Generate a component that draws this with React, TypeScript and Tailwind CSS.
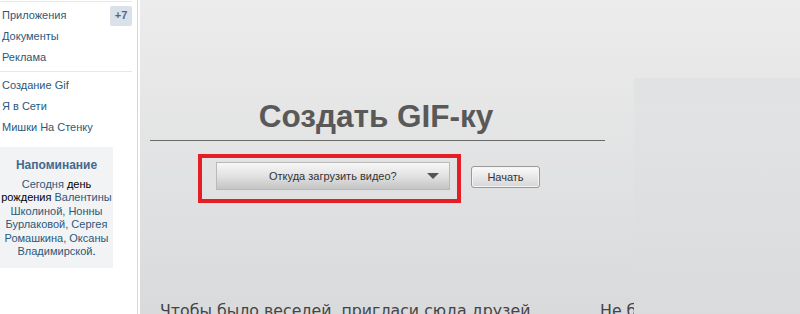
const MENU_TOP = ["Приложения", "Документы", "Реклама"]
const MENU_APPS = ["Создание Gif", "Я в Сети", "Мишки На Стенку"]

function Sidebar() {
  return (
    <aside className="w-[137px] shrink-0 bg-white text-[11px] text-[#2b587a] [font-family:'Liberation_Sans',Arial,sans-serif]">
      <div className="mt-[1px] h-px w-[132px] bg-[#e7e8ec]" />
      <ul className="mt-[3px]">
        {MENU_TOP.map((item, i) => (
          <li key={item} className="flex h-[21px] items-center justify-between pl-[2px] pr-[5px]">
            <span>{item}</span>
            {i === 0 && (
              <span className="flex h-[20px] w-[22px] items-center justify-center rounded-[2px] bg-[#dae1e8] font-bold text-[#55677d]">
                +7
              </span>
            )}
          </li>
        ))}
      </ul>
      <div className="mt-[3px] h-px w-[132px] bg-[#e7e8ec]" />
      <ul className="mt-[3px]">
        {MENU_APPS.map((item) => (
          <li key={item} className="flex h-[21px] items-center pl-[2px]">
            {item}
          </li>
        ))}
      </ul>
      <div className="mt-[9px] w-[113px] bg-[#f2f3f5] pt-[9px] pb-[10px] text-center">
        <div className="text-[12px] font-bold text-[#45688e]">Напоминание</div>
        <p className="mt-[4px] leading-[13.4px] whitespace-nowrap text-[#2b587a]">
          Сегодня <span className="text-black">день</span>
          <br />
          <span className="text-black">рождения</span> Валентины
          <br />
          Школиной, Нонны
          <br />
          Бурлаковой, Сергея
          <br />
          Ромашкина, Оксаны
          <br />
          Владимирской<span className="text-black">.</span>
        </p>
      </div>
    </aside>
  )
}

function SourceSelect() {
  return (
    <div className="border-[4px] border-[#e31e26] pt-[4px] pr-[7px] pb-[9px] pl-[14px]">
      <button className="flex h-[28px] w-[234px] items-center border border-[#b9b9b9] bg-gradient-to-b from-[#f7f7f7] via-[#e2e2e2] to-[#c4c4c4] pl-[52px] pr-[10px] text-[11px] text-[#333]">
        <span className="flex-1 text-left">Откуда загрузить видео?</span>
        <svg width="12" height="6" viewBox="0 0 12 6">
          <path d="M0 0h12L6 6z" fill="#555" />
        </svg>
      </button>
    </div>
  )
}

export default function App() {
  return (
    <div className="flex h-[314px] w-[800px] overflow-hidden bg-white [font-family:'Liberation_Sans',Arial,sans-serif]">
      <Sidebar />
      <div className="w-px shrink-0 bg-[#d5d8dc]" />
      <div className="w-[2px] shrink-0 bg-white" />
      <main className="flex flex-1 bg-gradient-to-b from-[#ececec] to-[#d9dadc]">
        <section className="flex w-[494px] shrink-0 flex-col overflow-hidden">
          <h1 className="mt-[96px] pr-[22px] text-center text-[31.5px] leading-[40px] font-bold text-[#595959]">
            Создать GIF-ку
          </h1>
          <div className="mt-[4px] ml-[10px] w-[455px] border-t border-[#6a6a6a]" />
          <div className="mt-[13px] ml-[58px] flex items-start gap-[10px]">
            <SourceSelect />
            <button className="mt-[12px] h-[22px] w-[69px] rounded-[3px] border border-[#9a9a9a] bg-gradient-to-b from-[#fafafa] to-[#d6d6d6] text-[11px] text-[#333] shadow-[inset_0_0_0_1px_#f4f4f4]">
              Начать
            </button>
          </div>
          <div className="mt-[96px] flex pl-[20px] text-[15.8px] whitespace-nowrap text-[#444] [font-family:'DejaVu_Sans',sans-serif]">
            <span className="w-[440px] shrink-0">Чтобы было веселей, пригласи сюда друзей</span>
            <span className="shrink-0">Не было</span>
          </div>
        </section>
        <section className="mt-[78px] flex flex-1 flex-col">
          <div className="h-[25px] bg-[#e1e2e3]" />
          <div className="flex-1 bg-gradient-to-b from-[#e2e3e4] to-[#dadbdc]" />
        </section>
      </main>
    </div>
  )
}
